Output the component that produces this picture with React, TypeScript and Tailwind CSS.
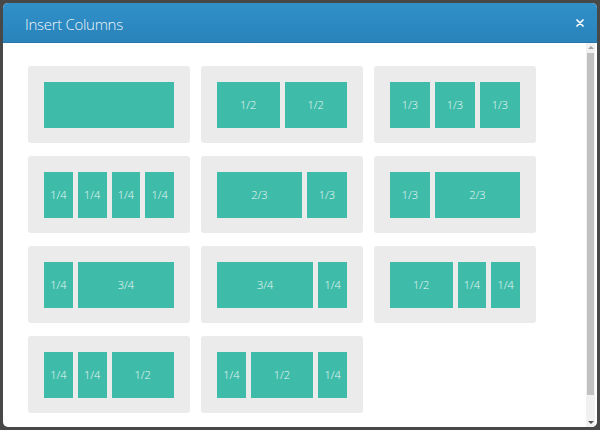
import React from 'react';

type Frac = '1' | '1/2' | '1/3' | '2/3' | '1/4' | '3/4';

// widths follow (fraction * 135px) - 5px gutter
const WIDTH: Record<Frac, string> = {
  '1': 'w-[130px]',
  '1/2': 'w-[62.5px]',
  '1/3': 'w-[40px]',
  '2/3': 'w-[85px]',
  '1/4': 'w-[28.75px]',
  '3/4': 'w-[96.25px]',
};

const LAYOUTS: Frac[][] = [
  ['1'],
  ['1/2', '1/2'],
  ['1/3', '1/3', '1/3'],
  ['1/4', '1/4', '1/4', '1/4'],
  ['2/3', '1/3'],
  ['1/3', '2/3'],
  ['1/4', '3/4'],
  ['3/4', '1/4'],
  ['1/2', '1/4', '1/4'],
  ['1/4', '1/4', '1/2'],
  ['1/4', '1/2', '1/4'],
];

function LayoutCard({ cols }: { cols: Frac[] }) {
  return (
    <button className="w-[162px] h-[77px] bg-[#ebebeb] rounded-[3px] pl-4 pt-4 flex items-start cursor-pointer">
      <div className="flex gap-[5px]">
        {cols.map((c, i) => (
          <div
            key={i}
            className={`${WIDTH[c]} h-[46px] bg-[#3fbba9] flex items-center justify-center text-[11px] font-light text-white/90`}
          >
            {c === '1' ? '' : c}
          </div>
        ))}
      </div>
    </button>
  );
}

export default function App() {
  return (
    <div
      className="w-[600px] h-[430px] bg-[#484848] p-[3px] overflow-hidden"
      style={{ fontFamily: '"Open Sans", "Noto Sans", sans-serif' }}
    >
      <div className="h-full flex flex-col rounded-[5px] overflow-hidden bg-white">
        {/* Header */}
        <div className="h-[40px] shrink-0 flex items-center justify-between pl-[22px] pr-[13px] pt-[3px] bg-gradient-to-b from-[#3090c8] to-[#2a83bb] border-b border-[#2776aa]">
          <span className="text-[15px] font-light text-white/95 tracking-[-0.3px]">Insert Columns</span>
          <svg width="8" height="8" viewBox="0 0 8 8" className="-mt-[3px]">
            <path d="M1 1L7 7M7 1L1 7" stroke="white" strokeWidth="1.7" strokeLinecap="round" />
          </svg>
        </div>

        {/* Body */}
        <div className="flex-1 flex min-h-0">
          <div className="flex-1 pl-[25px] pt-[23px]">
            <div className="grid grid-cols-[162px_162px_162px] gap-x-[11px] gap-y-[13px]">
              {LAYOUTS.map((cols, i) => (
                <LayoutCard key={i} cols={cols} />
              ))}
            </div>
          </div>

          {/* Scrollbar */}
          <div className="w-[9px] mr-[2px] bg-[#f1f1f1] flex flex-col items-center">
            <div className="h-[9px] flex items-center justify-center">
              <div className="w-0 h-0 border-l-[3px] border-r-[3px] border-b-[3px] border-l-transparent border-r-transparent border-b-[#a3a3a3]" />
            </div>
            <div className="w-[7px] h-[342px] bg-[#c1c1c1] mt-[1px]" />
            <div className="flex-1" />
            <div className="h-[9px] flex items-center justify-center">
              <div className="w-0 h-0 border-l-[3px] border-r-[3px] border-t-[3px] border-l-transparent border-r-transparent border-t-[#505050]" />
            </div>
          </div>
        </div>
      </div>
    </div>
  );
}
